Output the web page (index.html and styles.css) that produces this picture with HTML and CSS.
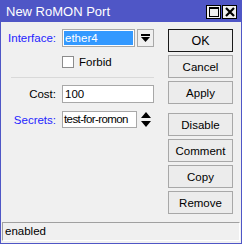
FILE: index.html
```html
<!DOCTYPE html>
<html lang="en">
<head>
    <meta charset="UTF-8">
    <title>New RoMON Port</title>
    <link rel="stylesheet" href="styles.css">
</head>
<body>
    <div class="window">
        <div class="titlebar">
            <span class="title">New RoMON Port</span>
            <div class="title-btns">
                <span class="tbtn">
                    <svg width="10" height="10" viewBox="0 0 10 10"><rect x="0.5" y="0.5" width="9" height="9" fill="none" stroke="#000"/><rect x="0" y="0" width="10" height="2" fill="#000"/></svg>
                </span>
                <span class="tbtn">
                    <svg width="10" height="10" viewBox="0 0 10 10"><path d="M1 1 L9 9 M9 1 L1 9" stroke="#000" stroke-width="2.2"/></svg>
                </span>
            </div>
        </div>

        <div class="content">
            <div class="form">
                <div class="row">
                    <label class="lbl link">Interface:</label>
                    <div class="field field-iface"><span class="selected">ether4</span></div>
                    <span class="drop-btn">
                        <svg width="9" height="8" viewBox="0 0 9 8"><rect x="0" y="0" width="9" height="2" fill="#000"/><path d="M0 3 L9 3 L4.5 8 Z" fill="#000"/></svg>
                    </span>
                </div>
                <div class="row check-row">
                    <span class="checkbox"></span>
                    <span class="check-text">Forbid</span>
                </div>
                <div class="sep"></div>
                <div class="row row-cost">
                    <label class="lbl">Cost:</label>
                    <div class="field field-cost">100</div>
                </div>
                <div class="row row-secrets">
                    <label class="lbl link">Secrets:</label>
                    <div class="field field-secrets">test-for-romon</div>
                    <span class="updown">
                        <svg width="10" height="15" viewBox="0 0 10 15"><path d="M5 0 L10 6 L0 6 Z M0 9 L10 9 L5 15 Z" fill="#000"/></svg>
                    </span>
                </div>
            </div>

            <div class="buttons">
                <button class="btn btn-default">OK</button>
                <button class="btn">Cancel</button>
                <button class="btn">Apply</button>
                <button class="btn btn-group">Disable</button>
                <button class="btn">Comment</button>
                <button class="btn">Copy</button>
                <button class="btn">Remove</button>
            </div>
        </div>

        <div class="status">
            <div class="status-cell">enabled</div>
        </div>
    </div>
</body>
</html>
```

FILE: styles.css
```css
* {
    margin: 0;
    padding: 0;
    box-sizing: border-box;
}

body {
    font-family: 'Liberation Sans', Arial, sans-serif;
    font-size: 11px;
    color: #000;
    background: #f0f0f0;
}

.window {
    width: 242px;
    height: 244px;
    display: flex;
    flex-direction: column;
    background: #f0f0f0;
    border: 1px solid #4f56c6;
    border-top: none;
}

.titlebar {
    height: 22px;
    background: #4f56c6;
    display: flex;
    align-items: center;
    justify-content: space-between;
    padding: 0 5px 0 6px;
    margin: 0 -1px;
}

.title {
    color: #fff;
    font-size: 13px;
    padding-top: 1px;
}

.title-btns {
    display: flex;
    gap: 1px;
    padding-top: 1px;
}

.tbtn {
    width: 15px;
    height: 14px;
    background: #f0f0f0;
    border: 1px solid #000;
    display: flex;
    align-items: center;
    justify-content: center;
}

.content {
    flex: 1;
    display: flex;
    justify-content: space-between;
    padding: 7px 8px 0 5px;
}

.form {
    display: flex;
    flex-direction: column;
}

.row {
    display: flex;
    align-items: center;
    height: 18px;
}

.lbl {
    width: 50px;
    margin-right: 6px;
    text-align: right;
    white-space: nowrap;
    font-size: 11.5px;
}

.link {
    color: #2424ff;
}

.field {
    height: 18px;
    border: 1px solid #a8a8a8;
    background: #fff;
    padding: 0 2px;
    line-height: 16px;
    white-space: nowrap;
    overflow: hidden;
    font-size: 11.5px;
}

.field-iface {
    width: 73px;
    padding: 1px;
}

.selected {
    display: block;
    height: 14px;
    line-height: 14px;
    background: #3399ff;
    color: #fff;
    padding-left: 1px;
}

.drop-btn {
    width: 17px;
    height: 18px;
    margin-left: 2px;
    border: 1px solid #a8a8a8;
    background: #f0f0f0;
    display: flex;
    align-items: center;
    justify-content: center;
}

.check-row {
    margin-top: 9px;
    height: 12px;
    padding-left: 56px;
    font-size: 11.5px;
}

.checkbox {
    width: 12px;
    height: 12px;
    border: 1px solid #8c8c8c;
    background: #fff;
    margin-right: 5px;
}

.sep {
    margin-top: 9px;
    margin-left: 5px;
    width: 143px;
    height: 1px;
    background: #d9d9d9;
}

.row-cost {
    margin-top: 7px;
}

.field-cost {
    width: 92px;
}

.row-secrets {
    margin-top: 8px;
    height: 17px;
}

.field-secrets {
    width: 75px;
    height: 17px;
    line-height: 15px;
    padding: 0 1px;
    letter-spacing: -0.6px;
}

.updown {
    margin-left: 4px;
    display: flex;
}

.buttons {
    display: flex;
    flex-direction: column;
    gap: 3px;
}

.btn {
    width: 65px;
    height: 23px;
    font-family: 'Liberation Sans', Arial, sans-serif;
    font-size: 11.5px;
    color: #000;
    background: #ececec;
    border: 1px solid #a8a8a8;
}

.btn-default {
    border-color: #1a1a1a;
    font-size: 12.5px;
}

.btn-group {
    margin-top: 6px;
}

.status {
    height: 19px;
    margin: 0 1px 2px 1px;
}

.status-cell {
    height: 19px;
    border-top: 1px solid #a0a0a0;
    border-left: 1px solid #a0a0a0;
    border-bottom: 1px solid #fff;
    border-right: 1px solid #fff;
    padding-left: 2px;
    line-height: 17px;
    font-size: 11.5px;
}
```
